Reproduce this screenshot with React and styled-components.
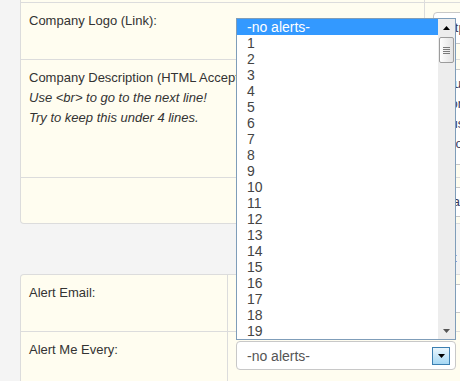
import React from "react";
import styled, { createGlobalStyle } from "styled-components";

const GlobalStyle = createGlobalStyle`
  html, body { margin: 0; padding: 0; background: #f4f4f4; overflow: hidden; }
  body { font-family: "Liberation Sans", Arial, sans-serif; font-size: 13px; color: #333; }
`;

const Page = styled.div`
  width: 640px;
  padding-left: 20px;
  margin-top: -20px;
`;

const Table = styled.div`
  background: #fffdf0;
  border-left: 1px solid #dcdcdc;
  border-right: 1px solid #dcdcdc;
  border-top: ${(p) => (p.$continued ? "none" : "1px solid #dcdcdc")};
  border-bottom: ${(p) => (p.$continued ? "1px solid #dcdcdc" : "none")};
  border-radius: ${(p) => (p.$continued ? "0 0 4px 4px" : "4px 4px 0 0")};
`;

const Row = styled.div`
  display: grid;
  grid-template-columns: ${(p) => p.$label}px 1fr;
  height: ${(p) => p.$h}px;
  border-top: ${(p) => (p.$first ? "none" : "1px solid #dcdcdc")};
  box-sizing: content-box;
`;

const Label = styled.div`
  box-sizing: border-box;
  border-right: 1px solid #dcdcdc;
  padding: 8px 8px;
  line-height: 20px;
`;

const Hint = styled.span`
  display: block;
  font-style: italic;
  line-height: 19.5px;
`;

const Field = styled.div`
  padding: 9px 8px;
  position: relative;
`;

const TextBox = styled.div`
  box-sizing: border-box;
  width: ${(p) => p.$w || 300}px;
  height: ${(p) => p.$h}px;
  border: 1px solid #c8c8c8;
  border-radius: 4px;
  background: #fff;
  padding: ${(p) => (p.$multi ? "4px 10px" : "0 10px")};
  line-height: ${(p) => (p.$multi ? "20px" : `${p.$h - 2}px`)};
  color: #3a3a5a;
  white-space: ${(p) => (p.$multi ? "normal" : "nowrap")};
  overflow: hidden;
`;

const Gap = styled.div`
  height: 50px;
  box-sizing: border-box;
  padding: 24px 0 0 410px;
  line-height: 20px;
`;

const Link = styled.span`
  color: #5a2a82;
`;

const SelectWrap = styled.div`
  position: relative;
  width: 220px;
`;

const SelectBox = styled.div`
  box-sizing: border-box;
  height: 29px;
  border: 1px solid #c8c8c8;
  border-radius: 4px;
  background: #fff;
  display: flex;
  align-items: center;
  justify-content: space-between;
  padding: 0 5px 0 10px;
  font-size: 14px;
  color: #555;
`;

const DropButton = styled.span`
  box-sizing: border-box;
  width: 18px;
  height: 18px;
  border: 1px solid #3c7fb1;
  background: linear-gradient(#eaf6fd, #a6d8f4);
  display: flex;
  align-items: center;
  justify-content: center;
`;

const ListBox = styled.div`
  position: absolute;
  left: 0;
  bottom: calc(100% + 1px);
  width: 220px;
  box-sizing: border-box;
  border: 1px solid #7f9db9;
  background: #fff;
  display: flex;
  z-index: 10;
`;

const Options = styled.ul`
  list-style: none;
  margin: 0;
  padding: 0;
  flex: 1;
`;

const Option = styled.li`
  height: 16px;
  line-height: 16px;
  padding-left: 10px;
  font-size: 14px;
  color: ${(p) => (p.$selected ? "#fff" : "#444")};
  background: ${(p) => (p.$selected ? "#3399ff" : "transparent")};
`;

const Scrollbar = styled.div`
  width: 17px;
  background: #ededed;
  display: flex;
  flex-direction: column;
`;

const ArrowBtn = styled.div`
  height: 17px;
  display: flex;
  align-items: center;
  justify-content: center;
`;

const Track = styled.div`
  flex: 1;
  padding: 1px 1px 0 1px;
`;

const Thumb = styled.div`
  box-sizing: border-box;
  height: 26px;
  border: 1px solid #9c9c9c;
  border-radius: 2px;
  background: linear-gradient(to right, #fdfdfd, #e2e2e2);
  display: flex;
  flex-direction: column;
  align-items: center;
  justify-content: center;
  gap: 1px;
`;

const Grip = styled.span`
  width: 7px;
  height: 1px;
  background: #7a7a7a;
`;

const Tri = ({ up, color = "#000" }) => (
  <svg width="7" height="4" viewBox="0 0 7 4">
    <polygon points={up ? "0,4 7,4 3.5,0" : "0,0 7,0 3.5,4"} fill={color} />
  </svg>
);

const options = ["-no alerts-", ...Array.from({ length: 19 }, (_, i) => String(i + 1))];

export default function App() {
  return (
    <>
      <GlobalStyle />
      <Page>
        <Table $continued>
          <Row $label={404} $h={22} $first>
            <Label />
            <Field />
          </Row>
          <Row $label={404} $h={56}>
            <Label>Company Logo (Link):</Label>
            <Field>
              <TextBox $h={32}>http://www.example.com/logo.png</TextBox>
            </Field>
          </Row>
          <Row $label={404} $h={117}>
            <Label>
              Company Description (HTML Accepted):
              <Hint>Use &lt;br&gt; to go to the next line!</Hint>
              <Hint>Try to keep this under 4 lines.</Hint>
            </Label>
            <Field>
              <TextBox $h={96} $multi>
                Our company runs a small online shop and is
                continuously expanding its range of products for customers
                and partners in many countries around the world.
              </TextBox>
            </Field>
          </Row>
          <Row $label={404} $h={45}>
            <Label />
            <Field>
              <TextBox $h={30}>Save a copy</TextBox>
            </Field>
          </Row>
        </Table>
        <Gap>
          <Link>Alert settings</Link>
        </Gap>
        <Table>
          <Row $label={207} $h={56} $first>
            <Label>Alert Email:</Label>
            <Field>
              <TextBox $h={29} $w={320}>name@example.com</TextBox>
            </Field>
          </Row>
          <Row $label={207} $h={60}>
            <Label>Alert Me Every:</Label>
            <Field>
              <SelectWrap>
                <ListBox>
                  <Options>
                    {options.map((o, i) => (
                      <Option key={o} $selected={i === 0}>
                        {o}
                      </Option>
                    ))}
                  </Options>
                  <Scrollbar>
                    <ArrowBtn>
                      <Tri up />
                    </ArrowBtn>
                    <Track>
                      <Thumb>
                        <Grip />
                        <Grip />
                        <Grip />
                        <Grip />
                      </Thumb>
                    </Track>
                    <ArrowBtn>
                      <Tri color="#555" />
                    </ArrowBtn>
                  </Scrollbar>
                </ListBox>
                <SelectBox>
                  -no alerts-
                  <DropButton>
                    <Tri />
                  </DropButton>
                </SelectBox>
              </SelectWrap>
            </Field>
          </Row>
        </Table>
      </Page>
    </>
  );
}
